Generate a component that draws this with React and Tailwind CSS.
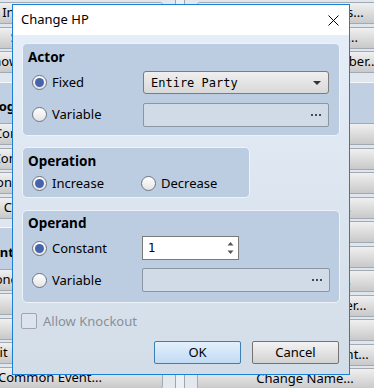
import React from "react";

const FONT = { fontFamily: '"Noto Sans", "Open Sans", sans-serif' };
const MONO = { fontFamily: '"DejaVu Sans Mono", "Liberation Mono", monospace' };

const leftItems = [
  { t: "Input Number..." },
  { t: "Select Item..." },
  { t: "Show Scrolling Text..." },
  { h: "Game Progression", pl: "pl-[7px]" },
  { t: "Control Switches..." },
  { t: "Control Variables..." },
  { t: "Control Self Switch..." },
  { t: "Control Timer..." },
  { h: "Flow Control", pl: "pl-[13px]" },
  { t: "Conditional Branch..." },
  { t: "Loop" },
  { t: "Break Loop" },
  { t: "Exit Event Processing" },
  { t: "Common Event..." },
];

const rightItems = [
  { t: "Change Weapons..." },
  { t: "Change Armors..." },
  { t: "Change Party Member..." },
  { h: "Actor", pl: "pl-[13px]" },
  { t: "Change HP..." },
  { t: "Change MP..." },
  { t: "Change TP..." },
  { t: "Change State..." },
  { t: "Recover All..." },
  { t: "Change EXP..." },
  { t: "Change Level..." },
  { t: "Change Parameter..." },
  { t: "Change Skill..." },
  { t: "Change Equipment..." },
  { t: "Change Name..." },
  { t: "Change Class..." },
];

function BgColumn({ items, className }) {
  return (
    <div className={"flex flex-col pt-[2px] shrink-0 " + className}>
      {items.map((it, i) =>
        it.h ? (
          <div key={i} className="h-[47.5px] shrink-0 flex flex-col">
            <div className="h-[6px] bg-[#dfe6ee]" />
            <div className="h-[1px] bg-[#f5f8fb]" />
            <div className={"flex-1 bg-[#c0cfe1] flex items-center pt-[8px] text-[13px] font-bold text-black " + it.pl}>
              {it.h}
            </div>
          </div>
        ) : (
          <div key={i} className="h-[24.5px] shrink-0">
            <div className="h-[22px] rounded-[3px] border border-[#a3a9b0] bg-gradient-to-b from-[#f0f0f0] to-[#c9c9c9] flex items-center justify-center text-[13px] text-black whitespace-nowrap">
              {it.t}
            </div>
          </div>
        )
      )}
    </div>
  );
}

function Radio({ checked }) {
  return (
    <div className="w-[15px] h-[15px] rounded-full border border-[#6e7683] bg-gradient-to-b from-[#ffffff] to-[#e4e4e4] flex items-center justify-center shrink-0">
      {checked && <div className="w-[9px] h-[9px] rounded-full bg-[#4664ae]" />}
    </div>
  );
}

function RadioLabel({ checked, label, className = "" }) {
  return (
    <div className={"flex items-center gap-[5px] " + className}>
      <Radio checked={checked} />
      <span className="text-[13px] text-black leading-none">{label}</span>
    </div>
  );
}

function Dots() {
  return (
    <svg width="10" height="2" viewBox="0 0 10 2">
      <rect x="0" y="0" width="2" height="2" fill="#4a4a4a" />
      <rect x="4" y="0" width="2" height="2" fill="#4a4a4a" />
      <rect x="8" y="0" width="2" height="2" fill="#4a4a4a" />
    </svg>
  );
}

function DisabledField({ className = "" }) {
  return (
    <div className={"h-[24px] rounded-[2px] border border-[#8c96a2] bg-[#d0dbe7] flex items-center justify-end pr-[7px] " + className}>
      <Dots />
    </div>
  );
}

function Group({ className = "", children }) {
  return (
    <div className={"rounded-[5px] border border-[#eef3f9] bg-[#bccde1] flex flex-col shrink-0 " + className}>
      {children}
    </div>
  );
}

export default function App() {
  return (
    <div className="relative w-[374px] h-[388px] overflow-hidden bg-[#dfe6ee]" style={FONT}>
      {/* background event commands window */}
      <div className="flex">
        <BgColumn items={leftItems} className="w-[226px] -ml-[63px]" />
        <div className="w-[34px] shrink-0 h-[388px] flex bg-[#e3e8ee]">
          <div className="w-[12px]" />
          <div className="w-[1px] bg-[#9da6b0]" />
          <div className="w-[8px] bg-[#eceff3]" />
          <div className="w-[1px] bg-[#9da6b0]" />
        </div>
        <BgColumn items={rightItems} className="w-[216px]" />
      </div>

      {/* dialog */}
      <div className="absolute left-[12px] top-[4px] w-[338px] h-[371px] border border-[#1a7fd6] flex flex-col">
        <div className="h-[30px] bg-white flex items-center justify-between pl-[8px] pr-[10px] shrink-0">
          <span className="text-[13px] text-black">Change HP</span>
          <svg width="11" height="11" viewBox="0 0 11 11">
            <path d="M0.5 0.5 L10.5 10.5 M10.5 0.5 L0.5 10.5" stroke="#000" strokeWidth="1" />
          </svg>
        </div>
        <div className="flex-1 bg-gradient-to-b from-[#e4edf8] to-[#d3dde8] flex flex-col px-[9px] pt-[8px]">
          {/* Actor */}
          <Group className="h-[93px]">
            <div className="h-[20px] mt-[3px] pl-[5px] flex items-center text-[13.5px] font-bold text-black">Actor</div>
            <div className="h-[23px] mt-[4px] flex items-center">
              <RadioLabel checked label="Fixed" className="w-[120px] pl-[9px]" />
              <div className="w-[186px] h-[23px] rounded-[3px] border border-[#7c7c7c] bg-gradient-to-b from-[#efefef] to-[#d9d9d9] flex items-center justify-between pl-[7px] pr-[7px]">
                <span className="text-[12px] text-black" style={MONO}>Entire Party</span>
                <svg width="8" height="4" viewBox="0 0 8 4">
                  <path d="M0 0 H8 L4 4 Z" fill="#333" />
                </svg>
              </div>
            </div>
            <div className="h-[23px] mt-[9px] flex items-center">
              <RadioLabel label="Variable" className="w-[120px] pl-[9px]" />
              <DisabledField className="w-[186px] h-[23px]" />
            </div>
          </Group>

          {/* Operation */}
          <Group className="h-[51px] w-[228px] mt-[11px]">
            <div className="h-[20px] mt-[3px] pl-[5px] flex items-center text-[13.5px] font-bold text-black">Operation</div>
            <div className="h-[16px] mt-[4px] flex items-center">
              <RadioLabel checked label="Increase" className="w-[118px] pl-[9px]" />
              <RadioLabel label="Decrease" />
            </div>
          </Group>

          {/* Operand */}
          <Group className="h-[93px] mt-[12px]">
            <div className="h-[20px] mt-[2px] pl-[5px] flex items-center text-[13.5px] font-bold text-black">Operand</div>
            <div className="h-[24px] mt-[3px] flex items-center">
              <RadioLabel checked label="Constant" className="w-[119px] pl-[9px]" />
              <div className="w-[97px] h-[24px] border border-[#7a7a7a] bg-white flex items-center justify-between pl-[5px] pr-[4px]">
                <span className="text-[12px] text-black" style={MONO}>1</span>
                <svg width="7" height="14" viewBox="0 0 7 14">
                  <path d="M0.5 4.5 L3.5 1 L6.5 4.5 Z" fill="#555" />
                  <path d="M0.5 9.5 L3.5 13 L6.5 9.5 Z" fill="#555" />
                </svg>
              </div>
            </div>
            <div className="h-[24px] mt-[8px] flex items-center">
              <RadioLabel label="Variable" className="w-[119px] pl-[9px]" />
              <DisabledField className="w-[188px]" />
            </div>
          </Group>

          {/* Allow Knockout */}
          <div className="h-[16px] mt-[10px] flex items-center gap-[6px] -ml-[1px]">
            <div className="w-[16px] h-[16px] rounded-[2px] border border-[#9ea6b0] bg-[#dde4ed]" />
            <span className="text-[13px] text-[#8a8f96] leading-none">Allow Knockout</span>
          </div>

          {/* Buttons */}
          <div className="flex justify-end gap-[11px] mt-[12px] pr-[1px]">
            <div className="w-[87px] h-[23px] rounded-[2px] border border-[#3d7fb3] bg-gradient-to-b from-[#e3f0fc] to-[#c1dbf4] flex items-center justify-center text-[13px] text-black">
              OK
            </div>
            <div className="w-[87px] h-[23px] rounded-[2px] border border-[#737373] bg-gradient-to-b from-[#f3f3f3] to-[#d2d2d2] flex items-center justify-center text-[13px] text-black">
              Cancel
            </div>
          </div>
        </div>
      </div>
    </div>
  );
}
